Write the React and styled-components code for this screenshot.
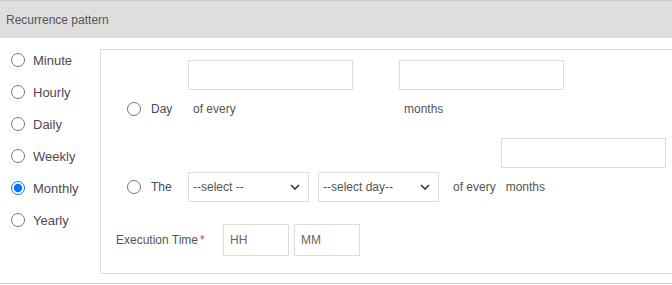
import React from 'react';
import styled, { createGlobalStyle } from 'styled-components';

const GlobalStyle = createGlobalStyle`
  body {
    margin: 0;
    background: #fff;
    font-family: 'Liberation Sans', Arial, sans-serif;
    color: #555;
  }
  * { box-sizing: border-box; }
`;

const Box = styled.div`
  width: 672px;
  border-bottom: 1px solid #cfcfcf;
  overflow: hidden;
`;

const Header = styled.div`
  height: 38px;
  background: #dedede;
  border-top: 1px solid #cacaca;
  padding-left: 6px;
  display: flex;
  align-items: center;
  font-size: 12px;
  color: #555;
`;

const Body = styled.div`
  display: flex;
  align-items: flex-start;
`;

const Types = styled.div`
  width: 100px;
  flex: none;
  padding: 6px 0 0 11px;
`;

const TypeRow = styled.label`
  height: 32px;
  display: flex;
  align-items: center;
  gap: 8px;
  font-size: 13px;
  color: #4a4a55;
`;

const Radio = styled.input.attrs({ type: 'radio' })`
  width: 14px;
  height: 14px;
  margin: 0;
  flex: none;
`;

const Panel = styled.div`
  flex: 1;
  margin: 11px 0 9px;
  border: 1px solid #dcdcdc;
  border-right: none;
  padding: 10px 0 17px 15px;
  font-size: 12px;
`;

const PatternRow = styled.div`
  display: flex;
  align-items: flex-end;
  padding-left: 11px;
  margin-top: ${(p) => p.$top || 0}px;
`;

const Choice = styled.label`
  width: 61px;
  height: 30px;
  flex: none;
  display: flex;
  align-items: center;
  gap: 10px;
  color: #4a4a55;
`;

const Field = styled.div`
  display: flex;
  flex-direction: column;
  margin-left: ${(p) => p.$left || 0}px;
`;

const Caption = styled.span`
  line-height: 30px;
  margin-top: 4px;
  padding-left: 5px;
  margin-left: ${(p) => p.$left || 0}px;
  white-space: nowrap;
`;

const TextBox = styled.input`
  width: ${(p) => p.$w || 165}px;
  height: ${(p) => p.$h || 30}px;
  border: 1px solid #dcdcdc;
  padding: 0 6px;
  font-family: inherit;
  font-size: 12px;
  color: #555;
  outline: none;
  &::placeholder { color: #666; }
`;

const Select = styled.select`
  appearance: none;
  width: 121px;
  height: 30px;
  margin-left: ${(p) => p.$left || 0}px;
  border: 1px solid #dcdcdc;
  background: #fff url("data:image/svg+xml,%3Csvg xmlns='http://www.w3.org/2000/svg' width='10' height='6' viewBox='0 0 10 6'%3E%3Cpath d='M1 1l4 4 4-4' fill='none' stroke='%23333' stroke-width='1.6'/%3E%3C/svg%3E") no-repeat right 8px center;
  padding: 0 20px 0 4px;
  font-family: inherit;
  font-size: 12px;
  color: #555;
  outline: none;
`;

const TimeRow = styled.div`
  display: flex;
  align-items: center;
  gap: 5px;
  margin-top: 22px;
`;

const TimeLabel = styled.span`
  width: 102px;
  color: #555;
  &::after {
    content: '*';
    color: #e0304e;
    margin-left: 2px;
  }
`;

const types = ['Minute', 'Hourly', 'Daily', 'Weekly', 'Monthly', 'Yearly'];

export default function App() {
  return (
    <>
      <GlobalStyle />
      <Box>
        <Header>Recurrence pattern</Header>
        <Body>
          <Types>
            {types.map((t) => (
              <TypeRow key={t}>
                <Radio name="type" defaultChecked={t === 'Monthly'} />
                {t}
              </TypeRow>
            ))}
          </Types>
          <Panel>
            <PatternRow>
              <Choice>
                <Radio name="monthly" />
                Day
              </Choice>
              <Field>
                <TextBox />
                <Caption>of every</Caption>
              </Field>
              <Field $left={46}>
                <TextBox />
                <Caption>months</Caption>
              </Field>
            </PatternRow>
            <PatternRow $top={14}>
              <Choice>
                <Radio name="monthly" />
                The
              </Choice>
              <Select defaultValue="">
                <option value="">--select --</option>
              </Select>
              <Select $left={9} defaultValue="">
                <option value="">--select day--</option>
              </Select>
              <Caption $left={9}>of every</Caption>
              <Field $left={5}>
                <TextBox />
                <Caption>months</Caption>
              </Field>
            </PatternRow>
            <TimeRow>
              <TimeLabel>Execution Time</TimeLabel>
              <TextBox $w={66} $h={32} placeholder="HH" />
              <TextBox $w={66} $h={32} placeholder="MM" />
            </TimeRow>
          </Panel>
        </Body>
      </Box>
    </>
  );
}
